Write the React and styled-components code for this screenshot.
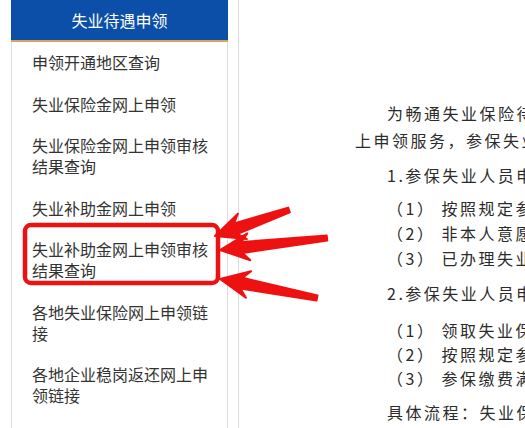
import React from 'react';
import styled, { createGlobalStyle } from 'styled-components';

const GlobalStyle = createGlobalStyle`
    html, body {
        margin:0;
        padding:0;
        background:#fff;
        overflow:hidden;
    }
    body{
        font-family:"Noto Sans CJK SC", "Noto Sans", sans-serif;
        color:#333;
    }
`;

const menu = [
    { text: '申领开通地区查询' },
    { text: '失业保险金网上申领' },
    { text: '失业保险金网上申领审核结果查询' },
    { text: '失业补助金网上申领' },
    { text: '失业补助金网上申领审核结果查询' },
    { text: '各地失业保险网上申领链接' },
    { text: '各地企业稳岗返还网上申领链接' },
    { text: '常见问题解答', accent: true },
];

// hand drawn annotation arrows: tip, tail
const arrows = [
    { tip: [215, 236], tail: [289, 210] },
    { tip: [220, 250], tail: [327, 238] },
    { tip: [220, 279], tail: [317, 298] },
];

function arrowPoints({ tip, tail }) {
    const headLen = 29, headHalf = 13.5, sweep = 7, neckHalf = 5.5, tailHalf = 2.5;
    const dx = tail[0] - tip[0];
    const dy = tail[1] - tip[1];
    const len = Math.hypot(dx, dy);
    const ux = dx / len, uy = dy / len;
    const nx = -uy, ny = ux;
    const bx = tip[0] + ux * headLen, by = tip[1] + uy * headLen;
    const kx = tip[0] + ux * (headLen - sweep), ky = tip[1] + uy * (headLen - sweep);
    const pts = [
        [tip[0], tip[1]],
        [bx + nx * headHalf, by + ny * headHalf],
        [kx + nx * neckHalf, ky + ny * neckHalf],
        [tail[0] + nx * tailHalf, tail[1] + ny * tailHalf],
        [tail[0] - nx * tailHalf, tail[1] - ny * tailHalf],
        [kx - nx * neckHalf, ky - ny * neckHalf],
        [bx - nx * headHalf, by - ny * headHalf],
    ];
    return pts.map(p => p.map(v => v.toFixed(1)).join(',')).join(' ');
}

function Annotation() {
    return (
        <StyledAnnotation width="525" height="428" viewBox="0 0 525 428">
            <rect x="25" y="225" width="193" height="58" rx="6" fill="none" stroke="#ee1111" strokeWidth="4.5" />
            {arrows.map((a, i) => (
                <polygon key={i} points={arrowPoints(a)} fill="#ee1111" stroke="#ee1111" strokeWidth="2" strokeLinejoin="round" />
            ))}
        </StyledAnnotation>
    );
}

function App() {
    return (
        <>
            <GlobalStyle />
            <Page>
                <Sidebar>
                    <SideHeader>失业待遇申领</SideHeader>
                    <MenuList>
                        {menu.map((m, i) => (
                            <MenuItem key={i} $accent={m.accent}>{m.text}</MenuItem>
                        ))}
                    </MenuList>
                </Sidebar>
                <Content>
                    <Para $indent>为畅通失业保险待遇申领渠道，人社部开通失业保险待遇网</Para>
                    <Para>上申领服务，参保失业人员可通过本平台在线办理申领手续。</Para>
                    <Para $indent $top={9} $lh={25}>1.参保失业人员申领失业保险金需同时符合以下条件：</Para>
                    <List $top={8}>
                        <li>（1） 按照规定参加失业保险，所在单位和本人已按规定履行缴费义务满1年的；</li>
                        <li>（2） 非本人意愿中断就业的；</li>
                        <li>（3） 已办理失业登记，并有求职要求的。</li>
                    </List>
                    <Para $indent $top={10} $lh={25}>2.参保失业人员申领失业补助金需同时符合以下条件：</Para>
                    <List $top={12} $lh={24}>
                        <li>（1） 领取失业保险金期满仍未就业的；</li>
                        <li>（2） 按照规定参加失业保险，所在单位和本人已按规定履行缴费义务；</li>
                        <li>（3） 参保缴费满1年不足3年的。</li>
                    </List>
                    <Para $indent $top={10} $lh={25}>具体流程：失业保险待遇网上申领流程如下。</Para>
                </Content>
            </Page>
            <Annotation />
        </>
    );
}

export default App;

const Page = styled.div`
    display:flex;
    align-items:stretch;
    gap:10px;
    padding-left:11px;
    width:525px;
    height:428px;
    box-sizing:border-box;
`;

const Sidebar = styled.div`
    width:217px;
    flex-shrink:0;
    display:flex;
    flex-direction:column;
`;

const SideHeader = styled.div`
    height:40px;
    line-height:40px;
    background-color:#0b4fa9;
    border-bottom:2px solid #d6a45c;
    color:#fff;
    font-size:16px;
    text-align:center;
`;

const MenuList = styled.ul`
    list-style:none;
    margin:0;
    padding:0;
    flex:1;
    border-left:1px solid #dedede;
    border-right:1px solid #dedede;
`;

const MenuItem = styled.li`
    padding:10px 15px 10.5px 20px;
    font-size:16px;
    line-height:21px;
    color:${props => props.$accent ? '#e8893a' : '#333'};
`;

const Content = styled.div`
    flex:1;
    min-width:0;
    border-left:1px solid #dcdcdc;
    padding:99.5px 0 0 116px;
    overflow:hidden;
`;

const Para = styled.p`
    margin:${props => props.$top || 0}px 0 0;
    font-size:16px;
    line-height:${props => props.$lh || 27}px;
    letter-spacing:2.5px;
    white-space:nowrap;
    text-indent:${props => props.$indent ? '32px' : '0'};
    color:#2b2b2b;
`;

const List = styled.ul`
    list-style:none;
    margin:${props => props.$top || 0}px 0 0;
    padding:0 0 0 32px;
    font-size:16px;
    line-height:${props => props.$lh || 25}px;
    letter-spacing:2.5px;
    white-space:nowrap;
    color:#2b2b2b;
`;

const StyledAnnotation = styled.svg`
    position:absolute;
    left:0;
    top:0;
    pointer-events:none;
`;
